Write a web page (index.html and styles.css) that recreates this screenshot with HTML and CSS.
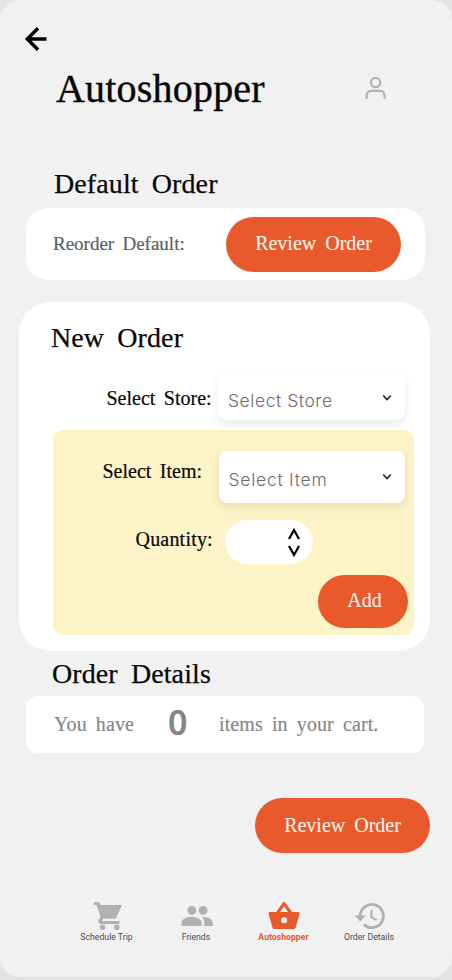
FILE: index.html
```html
<!DOCTYPE html>
<html lang="en">
<head>
<meta charset="utf-8">
<title>Autoshopper</title>
<link rel="stylesheet" href="styles.css">
</head>
<body>
<main class="screen">
  <a class="back" aria-label="Back">
    <svg width="24" height="28" viewBox="0 0 24 28"><path d="M22.5 14H4M14 3.2L3.3 14l10.7 10.8" fill="none" stroke="#000" stroke-width="3.4"/></svg>
  </a>
  <header class="header">
    <h1 class="title">Autoshopper</h1>
    <svg class="user" width="22" height="24" viewBox="0 0 22 24" fill="none" stroke="#b3b3b3" stroke-width="2.2" stroke-linecap="round"><circle cx="10.6" cy="5.6" r="4.6"/><path d="M1.6 21.2v-2.8a4.5 4.5 0 0 1 4.5-4.5h8.9a4.5 4.5 0 0 1 4.5 4.5v2.8"/></svg>
  </header>

  <h2 class="heading heading-default">Default Order</h2>
  <section class="card reorder">
    <span class="reorder-label">Reorder Default:</span>
    <button class="button review">Review Order</button>
  </section>

  <section class="card new-order">
    <h2 class="heading heading-new">New Order</h2>
    <div class="row store-row">
      <span class="label">Select Store:</span>
      <div class="select store"><span class="store-text">Select Store</span><svg class="chevron" width="10" height="8" viewBox="0 0 10 8"><path d="M1.2 1.5L5 5.5l3.8-4" fill="none" stroke="#222" stroke-width="1.6"/></svg></div>
    </div>
    <div class="item-panel">
      <div class="row item-row">
        <span class="label">Select Item:</span>
        <div class="select item"><span class="item-text">Select Item</span><svg class="chevron" width="10" height="8" viewBox="0 0 10 8"><path d="M1.2 1.5L5 5.5l3.8-4" fill="none" stroke="#222" stroke-width="1.6"/></svg></div>
      </div>
      <div class="row quantity-row">
        <span class="label">Quantity:</span>
        <div class="quantity"><svg width="14" height="30" viewBox="0 0 14 30" fill="none" stroke="#000" stroke-width="2.2"><path d="M2 12L7 3l5 9M2 19l5 9 5-9"/></svg></div>
      </div>
      <button class="button add">Add</button>
    </div>
  </section>

  <h2 class="heading heading-details">Order Details</h2>
  <section class="card cart">
    <span class="have">You have</span>
    <span class="count">0</span>
    <span class="items">items in your cart.</span>
  </section>
  <button class="button review checkout">Review Order</button>

  <nav class="nav">
    <a class="tab">
      <svg class="tab-icon" width="32" height="32" viewBox="0 0 32 32" fill="#b0b0b0"><path d="M2 2h5.2l1.4 3H30l-5.6 12.2c-.5 1-1.3 1.5-2.4 1.5H11.2L9.8 21h17.7v3H8.8c-2.2 0-3.3-1.6-2.3-3.4l2-3.8L4.5 5H2z"/><circle cx="10.5" cy="27.3" r="2.8"/><circle cx="24.7" cy="27.3" r="2.8"/></svg>
      <span>Schedule Trip</span>
    </a>
    <a class="tab">
      <svg class="tab-icon" width="32" height="32" viewBox="0 0 32 32" fill="#b0b0b0"><circle cx="10.8" cy="10.4" r="4.4"/><circle cx="22.1" cy="10.4" r="4.4"/><path d="M.6 26V22.6c0-3.5 5.4-5.8 10-5.8s10 2.3 10 5.8V26zM21.2 16.9c5.1-.2 10.6 1.9 10.6 5.7V26H23.3v-3.4c0-2.5-.8-4.2-2.1-5.7z"/></svg>
      <span>Friends</span>
    </a>
    <a class="tab active">
      <svg class="tab-icon" width="32" height="32" viewBox="0 0 32 32"><path fill="#e85a2b" fill-rule="evenodd" d="M8.3 12L14.7 2.8c.7-1 2.1-1 2.8 0L23.9 12h6.2c1 0 1.7.8 1.5 1.8l-3.8 13.1c-.4 1.4-1.3 2.1-2.8 2.1H7.1c-1.5 0-2.5-.7-2.8-2.1L.6 13.8C.4 12.8 1 12 2 12zm3.7 0h8.1l-4-6zM16.1 17.3a3 3 0 1 0 0 6 3 3 0 0 0 0-6z"/></svg>
      <span>Autoshopper</span>
    </a>
    <a class="tab">
      <svg class="tab-icon" width="32" height="32" viewBox="0 0 32 32"><path d="M6.2 16A11.6 11.6 0 1 1 9.8 24.4" fill="none" stroke="#b0b0b0" stroke-width="2.8"/><path d="M.6 15.6h11.2L6.2 21.5z" fill="#b0b0b0"/><path d="M17.4 10v7.2l5.2 3" fill="none" stroke="#b0b0b0" stroke-width="2.1"/></svg>
      <span>Order Details</span>
    </a>
  </nav>
</main>
</body>
</html>
```
FILE: styles.css
```css
* { box-sizing: border-box; }
body { margin: 0; height: 980px; overflow: hidden; background: #e3e3e3; font-family: "Liberation Serif", serif; color: #080808; }
h1, h2 { margin: 0; font-weight: 400; white-space: nowrap; }
span { white-space: nowrap; }
svg { display: block; flex: none; }
.screen { width: 452px; height: 977px; display: flex; flex-direction: column; background: #f1f1f1; border-radius: 20px; }
.back { margin: 25px 0 0 24px; height: 28px; }
.header { display: flex; justify-content: space-between; align-items: center; height: 50px; margin: 11px 65px 0 56px; }
.title { font-size: 40px; line-height: 50px; letter-spacing: 0.2px; -webkit-text-stroke: 0.4px; }
.heading { font-size: 28px; line-height: 36px; letter-spacing: 0.1px; word-spacing: 6px; -webkit-text-stroke: 0.25px; }
.heading-default { margin: 52px 0 0 54px; height: 42px; }
.card { background: #fff; }
.reorder { width: 399px; height: 72px; margin-left: 26px; padding: 0 24px 0 27px; border-radius: 22px; display: flex; align-items: center; justify-content: space-between; }
.reorder-label { font-size: 19px; word-spacing: 3.5px; color: #58616c; -webkit-text-stroke: 0.2px; }
.button { border: 0; padding: 0 0 2px; background: #e85a2b; color: #fff3ec; font-family: inherit; font-size: 20px; word-spacing: 4px; border-radius: 28px; -webkit-text-stroke: 0.1px; }
.review { width: 175px; height: 55px; }
.new-order { width: 411px; height: 349px; margin: 22px 0 0 19px; padding: 18px 16px 0 32px; border-radius: 32px; }
.heading-new { height: 54px; }
.row { display: flex; }
.label { font-size: 20px; line-height: 24px; word-spacing: 3.5px; -webkit-text-stroke: 0.2px; }
.store-row { height: 56px; margin-left: 55.5px; justify-content: space-between; padding-right: 9px; }
.store-row .label { margin-top: 12px; }
.select { display: flex; justify-content: space-between; background: #fff; border-radius: 8px; box-shadow: 0 4px 10px rgba(0,0,0,.09); font-family: Inter, sans-serif; font-weight: 300; font-size: 17.5px; color: #6c6c6c; }
.store { width: 187px; height: 46px; padding: 16px 13px 0 10px; line-height: 22px; }
.store-text { letter-spacing: .55px; }
.item { width: 186px; height: 52px; padding: 18px 13px 0 10px; line-height: 22px; }
.item-text { letter-spacing: .75px; }
.chevron { margin-top: 4px; }
.item-panel { width: 361px; height: 205px; margin-left: 1.5px; padding: 21px 6px 0 0; background: #fcf3c6; border-radius: 10px; }
.item-row { margin-left: 50px; padding-right: 3px; justify-content: space-between; height: 69px; }
.item-row .label { margin-top: 8px; }
.quantity-row { margin-left: 83px; gap: 11px; height: 55px; }
.quantity-row .label { width: 78px; margin-top: 7px; letter-spacing: .2px; }
.quantity { width: 88px; height: 44px; padding: 7px 12px 0 0; display: flex; justify-content: flex-end; border-radius: 22px; background: #fff; }
.add { display: block; width: 90px; height: 53px; margin-left: auto; padding-left: 4px; }
.heading-details { margin: 5px 0 0 52px; height: 40px; }
.cart { display: grid; grid-template-columns: 105px 60px auto; align-items: center; width: 398px; height: 57px; margin-left: 26px; padding-left: 28px; border-radius: 12px; font-size: 20px; word-spacing: 4px; letter-spacing: .1px; color: #858585; -webkit-text-stroke: 0.15px; }
.count { font: 600 34px/40px "Noto Sans", sans-serif; padding: 0 0 6px 9px; letter-spacing: 0; }
.checkout { margin: 45px 0 0 255px; padding: 0; flex: none; }
.nav { display: grid; grid-template-columns: 91px 88px 87px 84px; width: 350px; margin: 47px 0 0 61px; font-family: Roboto, sans-serif; font-size: 8.7px; line-height: 11px; color: #4a4a4a; }
.tab { display: flex; flex-direction: column; align-items: center; }
.tab-icon { margin-left: 2px; }
.tab:nth-child(2) .tab-icon { margin-left: 1px; }
.active { color: #e85a2b; font-weight: 700; }
.active .tab-icon { margin-left: 1px; }
```
